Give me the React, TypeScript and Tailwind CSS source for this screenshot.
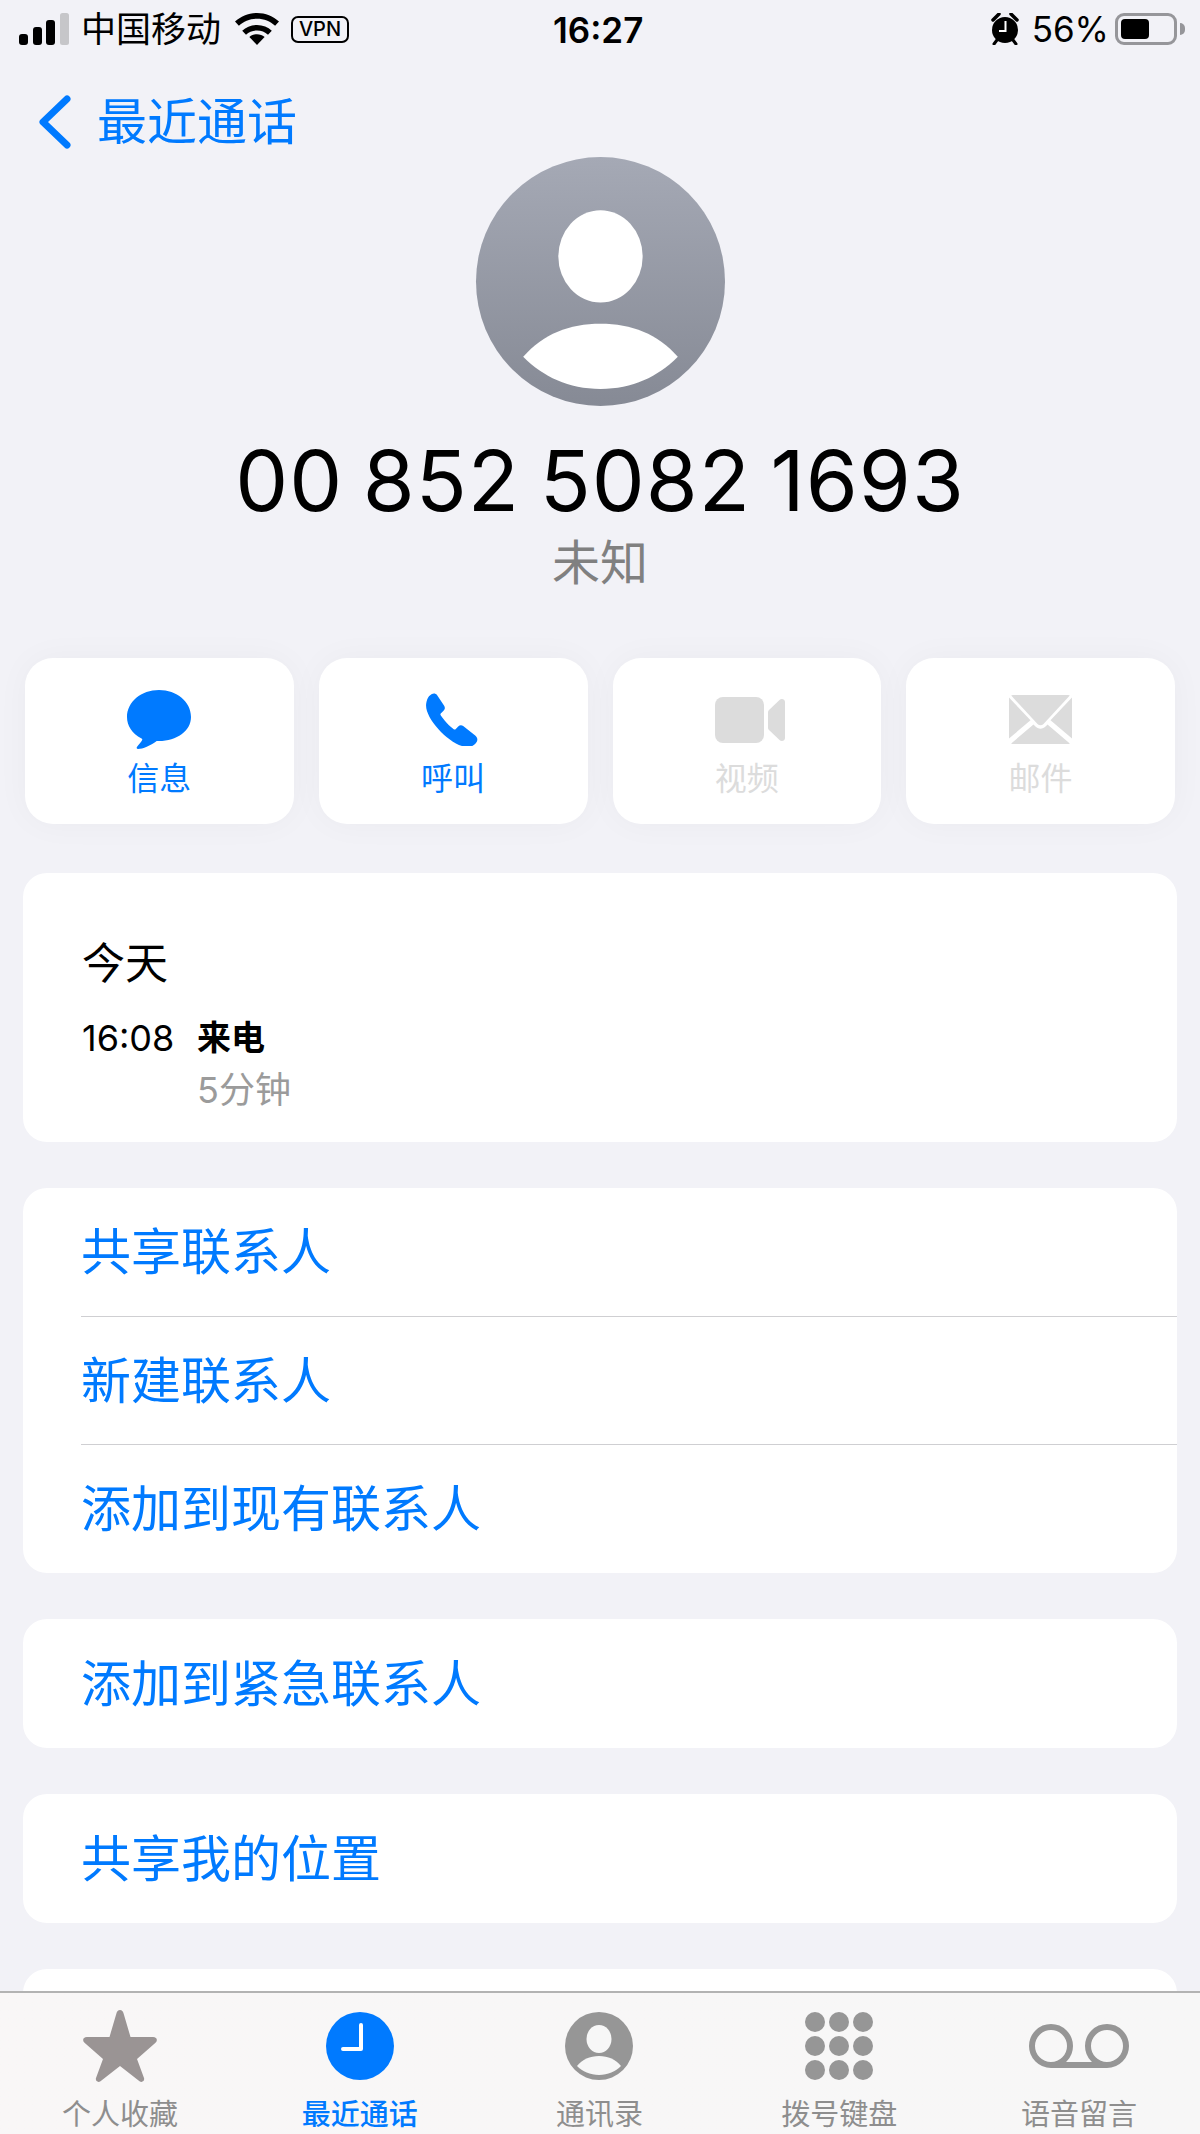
import React from "react";

const FONT = "font-['Inter','Noto_Sans_CJK_SC',sans-serif]";

function SignalBars() {
  return (
    <svg width="50" height="32" viewBox="0 0 50 32" className="mr-[12px]">
      <rect x="0" y="21" width="9" height="11" rx="3" fill="#000" />
      <rect x="14" y="14" width="9" height="18" rx="3" fill="#000" />
      <rect x="27" y="7" width="9" height="25" rx="3" fill="#000" />
      <rect x="41" y="0" width="9" height="32" rx="2.5" fill="#c6c6c9" />
    </svg>
  );
}

function Wifi() {
  return (
    <svg width="44" height="32" viewBox="0 0 44 32">
      <path d="M22 32l-7.600-8c4.200-3.600 11-3.600 15.200 0z" fill="#000" />
      <path d="M22 12c-5.800 0-11 2.200-14.800 5.700l3.800 4c2.900-2.600 6.700-4.200 11-4.200s8.100 1.600 11 4.200l3.800-4C33 14.200 27.800 12 22 12z" fill="#000" />
      <path d="M22 0C13.500 0 5.800 3.300 0 8.600l3.900 4.100C8.700 8.300 15 5.700 22 5.700s13.300 2.600 18.100 7L44 8.600C38.200 3.300 30.500 0 22 0z" fill="#000" />
    </svg>
  );
}

function Alarm() {
  return (
    <svg width="28" height="32" viewBox="0 0 28 32">
      <path d="M2 7l6-6M26 7l-6-6" stroke="#000" strokeWidth="3.500" strokeLinecap="round" />
      <path d="M6 27l-3 4M22 27l3 4" stroke="#000" strokeWidth="3" strokeLinecap="round" />
      <circle cx="14" cy="17" r="13" fill="#000" />
      <path d="M14.500 8v10H8" stroke="#fff" strokeWidth="2" fill="none" />
    </svg>
  );
}

function Battery() {
  return (
    <div className="flex items-center ml-[6px]">
      <div className="w-[62px] h-[32px] rounded-[9px] border-[3px] border-[#96969a] p-[3px] flex">
        <div className="w-[28px] h-full rounded-[4px] bg-black" />
      </div>
      <div className="ml-[3px] w-[5px] h-[12px] rounded-r-full bg-[#96969a]" />
    </div>
  );
}

function StatusBar() {
  return (
    <div className="relative h-[60px] flex items-start justify-between pl-[19px] pr-[15px] pt-[13px]">
      <div className="flex items-center h-[32px]">
        <SignalBars />
        <span className="text-[35px] leading-[32px] text-black w-[140px]">中国移动</span>
        <span className="ml-[14px]"><Wifi /></span>
        <span className="ml-[12px] w-[58px] h-[27px] rounded-[7px] border-[2px] border-black text-[20px] leading-[23px] text-center text-black font-medium">VPN</span>
      </div>
      <div className="absolute left-[553px] top-[12px] text-[35px] leading-[36px] font-semibold text-black">16:27</div>
      <div className="flex items-center h-[32px]">
        <Alarm />
        <span className="ml-[13px] text-[35px] leading-[32px] text-black">56%</span>
        <Battery />
      </div>
    </div>
  );
}

function ChevronBack() {
  return (
    <svg width="33" height="54" viewBox="0 0 33 54">
      <path d="M29 4L5 27l24 23" stroke="#007aff" strokeWidth="7" fill="none" strokeLinecap="round" strokeLinejoin="round" />
    </svg>
  );
}

function MessageIcon() {
  return (
    <svg width="64" height="59" viewBox="0 0 64 59">
      <path d="M32 0C14.300 0 0 11.900 0 27c0 8.700 4.800 16.300 14.500 21.500.700.400 1 1 .700 1.600-1.100 2.200-3.700 5.100-5.300 6.900-.600.800-.100 2 1.100 2 4.800-.300 12.400-3.300 18.700-8.100H32c17.700 0 32-10 32-24C64 11.900 49.700 0 32 0z" fill="#007aff" />
    </svg>
  );
}

function PhoneIcon() {
  return (
    <svg width="53" height="53" viewBox="0 0 53 53" className="mr-[2px]">
      <path d="M3 3.300C5.500.300 9-.7 11 2l7 10.500c1.400 2.100 1 3.800-.7 5.400l-2.300 2.300c-.600.600-.800 1.300-.300 2.100 2.300 3.900 8.500 10.700 13 13.900.800.500 1.500.400 2.100-.200l2.400-2.500c1.500-1.500 3.200-1.800 5-.500l12 9.500c2.800 2.300 2.700 5.100.600 7.700-2 2.500-4.800 3.800-8.300 3.800C26 54 -2.200 25.500.2 10.500.600 7.800 1.500 5.300 3 3.300z" fill="#007aff" />
    </svg>
  );
}

function VideoIcon() {
  return (
    <svg width="70" height="46" viewBox="0 0 70 46" className="ml-[6px]">
      <rect x="0" y="0" width="49" height="46" rx="8" fill="#dcdcdc" />
      <path d="M53 15.500c0-1.100.400-1.800 1-2.400L64.500 3c2-1.900 5.500-.800 5.500 2v36c0 2.800-3.500 3.900-5.500 2L54 33c-.600-.600-1-1.300-1-2.400z" fill="#dcdcdc" />
    </svg>
  );
}

function MailIcon() {
  return (
    <svg width="63" height="49" viewBox="0 0 63 49">
      <path d="M4 0h55c.800 0 1.400.200 1.800.600L34.500 29c-1.700 1.800-4.300 1.800-6 0L2.200.600C2.600.200 3.200 0 4 0z" fill="#dcdcdc" />
      <path d="M0 5.500L21.500 28.300 0 46.500z" transform="translate(0 -3)" fill="#dcdcdc" />
      <path d="M63 5.500L41.500 28.300 63 46.500z" transform="translate(0 -3)" fill="#dcdcdc" />
      <path d="M24.500 29.500l1.700 1.800c3 3.200 7.600 3.200 10.600 0l1.700-1.800L60.800 48.400c-.400.400-1 .600-1.800.600H4c-.800 0-1.400-.200-1.800-.600z" fill="#dcdcdc" />
    </svg>
  );
}

function ActionButton({ label, icon, muted }: { label: string; icon: React.ReactNode; muted?: boolean }) {
  return (
    <div className="h-[166px] rounded-[28px] bg-white shadow-[0_0_34px_rgba(0,0,0,0.035)] flex flex-col items-center">
      <div className="h-[105px] pb-[12px] flex items-center justify-center pt-[30px]">{icon}</div>
      <div className={muted ? "text-[32px] leading-[32px] text-[#dcdcdc]" : "text-[32px] leading-[32px] text-[#007aff]"}>{label}</div>
    </div>
  );
}

function Avatar() {
  return (
    <div className="w-[249px] h-[249px] rounded-full bg-linear-to-b from-[#a5a9b5] to-[#868a95] overflow-hidden">
      <svg width="249" height="249" viewBox="0 0 248 248">
        <ellipse cx="124" cy="99" rx="42" ry="46" fill="#fff" />
        <path d="M47 199C67 176 93 166 124 166s57 10 77 33c-20 20-45 32-77 32S67 219 47 199z" fill="#fff" />
      </svg>
    </div>
  );
}

function LinkCard({ rows }: { rows: string[] }) {
  return (
    <div className={rows.length > 1 ? "mx-[23px] h-[385px] rounded-[24px] bg-white overflow-hidden pl-[58px] flex flex-col" : "mx-[23px] h-[129px] rounded-[24px] bg-white overflow-hidden pl-[58px] flex flex-col"}>
      {rows.map((r, i) => (
        <div key={r} className={i < rows.length - 1 ? "flex-1 border-b border-[#cfcfd2] box-border" : "flex-1"}>
          <div className="h-full flex items-center text-[50px] leading-[60px] text-[#007aff]">{r}</div>
        </div>
      ))}
    </div>
  );
}

function StarIcon() {
  return (
    <svg width="74" height="72" viewBox="0 0 74 72">
      <path d="M37 0c2 0 3 1.500 3.600 3.500L47.500 27H70c4 0 5 3.500 2.500 5.700L54 49l7 19c.900 3-2 5-4.500 3.200L37 56 17.500 71.200C15 73 12.100 71 13 68l7-19L1.500 32.700C-1 30.500 0 27 4 27h22.500l6.900-23.500C34 1.500 35 0 37 0z" fill="#9a9494" />
    </svg>
  );
}

function ClockIcon() {
  return (
    <svg width="68" height="68" viewBox="0 0 68 68">
      <circle cx="34" cy="34" r="34" fill="#007aff" />
      <path d="M35 13v24H17" stroke="#fff" strokeWidth="4" fill="none" strokeLinecap="round" strokeLinejoin="round" />
    </svg>
  );
}

function ContactIcon() {
  return (
    <svg width="68" height="68" viewBox="0 0 68 68">
      <circle cx="34" cy="34" r="34" fill="#969696" />
      <ellipse cx="34" cy="27" rx="12.500" ry="14" fill="#f7f7f7" />
      <path d="M12 54c5-6.500 13-10 22-10s17 3.500 22 10c-5.500 5.500-13 9-22 9s-16.500-3.500-22-9z" fill="#f7f7f7" />
    </svg>
  );
}

function KeypadIcon() {
  const rows = [10, 34, 58];
  const cols = [10, 34, 58];
  return (
    <svg width="68" height="68" viewBox="0 0 68 68">
      {rows.map((y) => cols.map((x) => <circle key={`${x}-${y}`} cx={x} cy={y} r="10" fill="#969696" />))}
    </svg>
  );
}

function VoicemailIcon() {
  return (
    <svg width="100" height="44" viewBox="0 0 100 44">
      <circle cx="22" cy="22" r="19" stroke="#969696" strokeWidth="6" fill="none" />
      <circle cx="78" cy="22" r="19" stroke="#969696" strokeWidth="6" fill="none" />
      <path d="M22 41h56" stroke="#969696" strokeWidth="6" />
    </svg>
  );
}

function Tab({ label, icon, active }: { label: string; icon: React.ReactNode; active?: boolean }) {
  return (
    <div className="flex flex-col items-center">
      <div className="h-[72px] flex items-center justify-center">{icon}</div>
      <div className={active ? "mt-[18px] text-[29px] leading-[30px] text-[#007aff] font-medium" : "mt-[18px] text-[29px] leading-[30px] text-[#8e8e8e]"}>{label}</div>
    </div>
  );
}

export default function App() {
  return (
    <div className={`${FONT} w-[1200px] h-[2134px] bg-[#f2f2f7] flex flex-col overflow-hidden`}>
      <div className="flex-1 min-h-0 overflow-hidden">
        <StatusBar />
        <div className="h-[54px] mt-[35px] pl-[38px] flex items-center">
          <ChevronBack />
          <span className="ml-[26px] text-[50px] leading-[54px] text-[#007aff]">最近通话</span>
        </div>

        <div className="mt-[8px] flex flex-col items-center">
          <Avatar />
          <div className="mt-[32px] text-[84px] leading-[86px] text-black tracking-[1px] [word-spacing:-5px]">00 852 5082 1693</div>
          <div className="mt-[11px] text-[48px] leading-[56px] text-[#808080]">未知</div>
        </div>

        <div className="mt-[67px] mx-[25px] grid grid-cols-4 gap-x-[25px]">
          <ActionButton label="信息" icon={<MessageIcon />} />
          <ActionButton label="呼叫" icon={<PhoneIcon />} />
          <ActionButton label="视频" icon={<VideoIcon />} muted />
          <ActionButton label="邮件" icon={<MailIcon />} muted />
        </div>

        <div className="mt-[49px] mx-[23px] h-[269px] rounded-[24px] bg-white pl-[59px] pt-[66px]">
          <div className="text-[43px] leading-[48px] text-black">今天</div>
          <div className="mt-[31px] flex items-center h-[40px]">
            <span className="w-[115px] text-[36px] leading-[40px] text-black">16:08</span>
            <span className="text-[34px] leading-[40px] text-black font-bold">来电</span>
          </div>
          <div className="mt-[12px] pl-[115px] text-[36px] leading-[40px] text-[#9b9b9b]">5分钟</div>
        </div>

        <div className="mt-[46px] flex flex-col gap-y-[46px]">
          <LinkCard rows={["共享联系人", "新建联系人", "添加到现有联系人"]} />
          <LinkCard rows={["添加到紧急联系人"]} />
          <LinkCard rows={["共享我的位置"]} />
          <div className="mx-[23px] h-[129px] rounded-[24px] bg-white" />
        </div>
      </div>

      <div className="h-[143px] border-t-[2px] border-[#b3b3b3] bg-linear-to-r from-[#f9f7f7] to-[#f7f7f7] grid grid-cols-5 pt-[17px] pr-[1px] box-border">
        <Tab label="个人收藏" icon={<StarIcon />} />
        <Tab label="最近通话" icon={<ClockIcon />} active />
        <Tab label="通讯录" icon={<ContactIcon />} />
        <Tab label="拨号键盘" icon={<KeypadIcon />} />
        <Tab label="语音留言" icon={<VoicemailIcon />} />
      </div>
    </div>
  );
}
